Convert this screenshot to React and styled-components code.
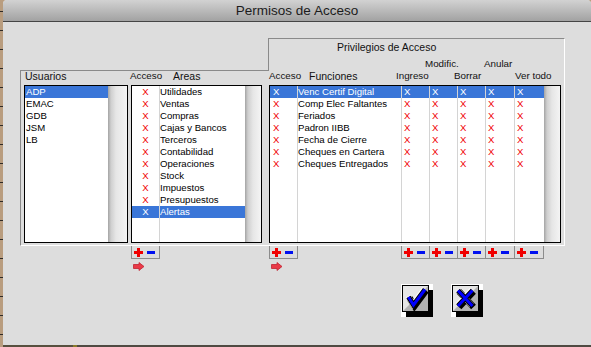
import React from "react";
import styled, { createGlobalStyle } from "styled-components";

const USERS = ["ADP", "EMAC", "GDB", "JSM", "LB"];
const AREAS = [
  "Utilidades",
  "Ventas",
  "Compras",
  "Cajas y Bancos",
  "Terceros",
  "Contabilidad",
  "Operaciones",
  "Stock",
  "Impuestos",
  "Presupuestos",
  "Alertas",
];
const FUNCS = [
  "Venc Certif Digital",
  "Comp Elec Faltantes",
  "Feriados",
  "Padron IIBB",
  "Fecha de Cierre",
  "Cheques en Cartera",
  "Cheques Entregados",
];
const PERM_COUNT = 5;
const FUNC_COLS = "28px 104px 28px 28px 28px 29px 29px";
const AREA_COLS = "28px 85px";

const GlobalStyle = createGlobalStyle`
  html, body { margin: 0; padding: 0; }
  body { font-family: "Liberation Sans", Arial, sans-serif; }
`;

const Screen = styled.div`
  display: flex;
  width: 591px;
  height: 347px;
  overflow: hidden;
  background: repeating-linear-gradient(
    to bottom,
    #b99d7f 0 11px,
    #2e2a26 11px 12px,
    #b99d7f 12px 19px
  );
`;

const Strip = styled.div`
  width: 3px;
  flex: none;
`;

const Window = styled.div`
  flex: 1;
  display: flex;
  flex-direction: column;
  background: #dddddd;
  border-radius: 4px 4px 0 0;
  overflow: hidden;
`;

const TitleBar = styled.div`
  height: 21px;
  flex: none;
  display: flex;
  align-items: center;
  justify-content: center;
  background: linear-gradient(#d2d2d2, #a2a2a2);
  border-bottom: 1px solid #454545;
  font-size: 13.5px;
  color: #1c1c1c;
`;

const Body = styled.div`
  flex: 1;
  padding: 16px 0 0 17px;
`;

const BottomEdge = styled.div`
  height: 2px;
  flex: none;
  background: linear-gradient(to right, #57503f 0 70px, #8a7a2a 70px 74px, #4f4a42 74px);
`;

const Group = styled.div`
  width: 545px;
  display: flex;
  flex-direction: column;
`;

const TabRow = styled.div`
  display: flex;
  justify-content: flex-end;
`;

const Tab = styled.div`
  width: 297px;
  height: 33px;
  box-sizing: border-box;
  border-top: 1px solid #8a8a8a;
  border-left: 1px solid #8a8a8a;
  border-right: 1px solid #ffffff;
  background: #dddddd;
  position: relative;
  z-index: 1;
  margin-bottom: -1px;
  padding: 2px 0 0 1px;
`;

const TabTitle = styled.div`
  font-size: 10.5px;
  line-height: 12px;
  padding-left: 67px;
  color: #111;
`;

const Box = styled.div`
  display: flex;
  border-top: 1px solid #8a8a8a;
  border-left: 1px solid #8a8a8a;
  border-right: 1px solid #ffffff;
  border-bottom: 1px solid #ffffff;
  padding: 0 3px 2px 3px;
`;

const Columns = styled.div`
  display: flex;
  padding-left: ${(p) => p.$pad || 0}px;
`;

const Section = styled.div`
  width: ${(p) => p.$w}px;
  margin-left: ${(p) => p.$ml || 0}px;
  flex: none;
  display: flex;
  flex-direction: column;
`;

const HeadGrid = styled.div`
  display: grid;
  grid-template-columns: ${(p) => p.$cols};
  align-items: start;
  height: ${(p) => p.$h || 14}px;
  padding-left: 1px;
  box-sizing: border-box;
  line-height: 10px;
  margin-top: ${(p) => p.$mt || 0}px;
`;

const Label = styled.span`
  grid-column: ${(p) => p.$col};
  justify-self: start;
  white-space: nowrap;
  margin-left: ${(p) => p.$shift || 0}px;
  font-size: ${(p) => (p.$big ? "10.5px" : "9.8px")};
  color: #111;
`;

const List = styled.div`
  height: 158px;
  box-sizing: border-box;
  border: 1px solid #000;
  background: #fff;
  display: flex;
`;

const ListGrid = styled.div`
  flex: 1;
  display: grid;
  grid-template-columns: ${(p) => p.$cols};
  grid-template-rows: repeat(${(p) => p.$rows}, 12px) 1fr;
`;

const Track = styled.div`
  width: ${(p) => p.$w}px;
  flex: none;
  background: linear-gradient(
    to right,
    #a4a4a4 0,
    #cfcfcf 3px,
    #e6e6e6 8px,
    #f4f4f4 100%
  );
`;

const Cell = styled.div`
  font-size: 9.6px;
  line-height: 12px;
  white-space: nowrap;
  overflow: hidden;
  box-sizing: border-box;
  padding-left: ${(p) => p.$pad || 0}px;
  text-align: ${(p) => (p.$center ? "center" : "left")};
  border-right: ${(p) => (p.$sep ? "1px solid #d4d4d4" : "none")};
  background: ${(p) => (p.$sel ? "#3a76d8" : "transparent")};
  color: ${(p) => (p.$sel ? "#fff" : p.$x ? "#f00000" : "#000")};
`;

const PmGrid = styled.div`
  display: grid;
  grid-template-columns: ${(p) => p.$cols};
`;

const PmBox = styled.div`
  grid-column: ${(p) => p.$col || "auto"};
  height: 13px;
  box-sizing: border-box;
  border-left: 1px solid #8c8c8c;
  border-bottom: 1px solid #8c8c8c;
  border-right: ${(p) => (p.$last ? "1px solid #8c8c8c" : "none")};
  display: flex;
  align-items: center;
  gap: 4px;
  padding-left: 2px;
`;

const ArrowRow = styled.div`
  margin-top: 3px;
  padding-left: 2px;
  height: 9px;
  display: flex;
`;

const ActionRow = styled.div`
  display: flex;
  gap: 17px;
  margin-top: 13px;
  padding-left: 381px;
`;

const ActionButton = styled.button`
  border: none;
  background: none;
  padding: 0;
  width: 33px;
  height: 34px;
  display: block;
  cursor: pointer;
`;

const Plus = () => (
  <svg width="9" height="9" viewBox="0 0 9 9">
    <rect x="0" y="3" width="9" height="3" fill="#f00000" />
    <rect x="3" y="0" width="3" height="9" fill="#f00000" />
  </svg>
);

const Minus = () => (
  <svg width="8" height="9" viewBox="0 0 8 9">
    <rect x="0" y="3" width="8" height="3" fill="#0010f0" />
  </svg>
);

const Arrow = () => (
  <svg width="12" height="9" viewBox="0 0 12 9">
    <path
      d="M0.5 2.5 H6 V0.5 L11 4.5 L6 8.5 V6.5 H0.5 Z"
      fill="#ea3a48"
      stroke="#c02432"
      strokeWidth="0.8"
    />
  </svg>
);

const PlusMinus = (props) => (
  <PmBox {...props}>
    <Plus />
    <Minus />
  </PmBox>
);

const IconFrame = ({ children }) => (
  <svg width="33" height="34" viewBox="0 0 33 34">
    <rect x="0" y="0" width="32" height="33" fill="#fff" />
    <rect x="5" y="6" width="27" height="27" fill="#000" />
    <rect x="2" y="2" width="25" height="25" fill="#b2b2b2" />
    <path d="M2 2 H27 L2 27 Z" fill="#e6e6e6" />
    <rect x="1.5" y="1.5" width="26" height="26" fill="none" stroke="#000" />
    {children}
  </svg>
);

const CheckIcon = () => {
  const d = "M7.5 13 L12.5 21 L24 5.5";
  return (
    <IconFrame>
      <path d={d} fill="none" stroke="#000" strokeWidth="6.5" transform="translate(1,1)" />
      <path d={d} fill="none" stroke="#fff" strokeWidth="5.5" transform="translate(-0.6,-0.6)" />
      <path d={d} fill="none" stroke="#000" strokeWidth="5" />
      <path d={d} fill="none" stroke="#0000ff" strokeWidth="3" />
    </IconFrame>
  );
};

const CrossIcon = () => {
  const d = "M7 6.5 L21.5 22 M21.5 6.5 L7 22";
  return (
    <IconFrame>
      <path d={d} fill="none" stroke="#000" strokeWidth="6.5" transform="translate(1,1)" />
      <path d={d} fill="none" stroke="#fff" strokeWidth="5.5" transform="translate(-0.6,-0.6)" />
      <path d={d} fill="none" stroke="#000" strokeWidth="5" />
      <path d={d} fill="none" stroke="#0000ff" strokeWidth="3" />
    </IconFrame>
  );
};

const UsersList = () => (
  <List>
    <ListGrid $cols="1fr" $rows={USERS.length}>
      {USERS.map((u, i) => (
        <Cell key={u} $pad={1} $sel={i === 0}>
          {u}
        </Cell>
      ))}
      <Cell />
    </ListGrid>
    <Track $w={19} />
  </List>
);

const AreasList = () => (
  <List>
    <ListGrid $cols={AREA_COLS} $rows={AREAS.length}>
      {AREAS.map((a, i) => (
        <React.Fragment key={a}>
          <Cell $x $center $sep $sel={i === AREAS.length - 1}>
            X
          </Cell>
          <Cell $sel={i === AREAS.length - 1}>{a}</Cell>
        </React.Fragment>
      ))}
      <Cell $sep />
      <Cell />
    </ListGrid>
    <Track $w={16} />
  </List>
);

const FuncsList = () => (
  <List>
    <ListGrid $cols={FUNC_COLS} $rows={FUNCS.length}>
      {FUNCS.map((f, i) => (
        <React.Fragment key={f}>
          <Cell $x $pad={3} $sep $sel={i === 0}>
            X
          </Cell>
          <Cell $sep $sel={i === 0}>
            {f}
          </Cell>
          {Array.from({ length: PERM_COUNT }).map((_, k) => (
            <Cell key={k} $x $pad={2} $sep={k < PERM_COUNT - 1} $sel={i === 0}>
              X
            </Cell>
          ))}
        </React.Fragment>
      ))}
      {Array.from({ length: 7 }).map((_, k) => (
        <Cell key={k} $sep={k < 6} />
      ))}
    </ListGrid>
    <Track $w={16} />
  </List>
);

const App = () => {
  return (
    <Screen>
      <GlobalStyle />
      <Strip />
      <Window>
        <TitleBar>Permisos de Acceso</TitleBar>
        <Body>
          <Group>
            <TabRow>
              <Tab>
                <TabTitle>Privilegios de Acceso</TabTitle>
                <HeadGrid $cols={FUNC_COLS} $h={12} $mt={6}>
                  <Label $col={4} $shift={-6}>
                    Modific.
                  </Label>
                  <Label $col={6} $shift={-3}>
                    Anular
                  </Label>
                </HeadGrid>
              </Tab>
            </TabRow>
            <Box>
              <Section $w={104}>
                <HeadGrid $cols="1fr">
                  <Label $col={1} $big>
                    Usuarios
                  </Label>
                </HeadGrid>
                <UsersList />
              </Section>
              <Section $w={131} $ml={3}>
                <HeadGrid $cols={AREA_COLS}>
                  <Label $col={1} $shift={-2}>
                    Acceso
                  </Label>
                  <Label $col={2} $shift={13} $big>
                    Areas
                  </Label>
                </HeadGrid>
                <AreasList />
              </Section>
              <Section $w={292} $ml={7}>
                <HeadGrid $cols={FUNC_COLS}>
                  <Label $col={1} $shift={-1}>
                    Acceso
                  </Label>
                  <Label $col={2} $shift={11} $big>
                    Funciones
                  </Label>
                  <Label $col={3} $shift={-6}>
                    Ingreso
                  </Label>
                  <Label $col={5} $shift={-4}>
                    Borrar
                  </Label>
                  <Label $col={7}>Ver todo</Label>
                </HeadGrid>
                <FuncsList />
              </Section>
            </Box>
          </Group>

          <Columns $pad={4}>
            <Section $w={104} />
            <Section $w={131} $ml={3}>
              <PmGrid $cols="29px">
                <PlusMinus $last />
              </PmGrid>
              <ArrowRow>
                <Arrow />
              </ArrowRow>
            </Section>
            <Section $w={292} $ml={7}>
              <PmGrid $cols="29px 103px 28px 28px 28px 29px 30px">
                <PlusMinus $col={1} $last />
                <PlusMinus $col={3} />
                <PlusMinus $col={4} />
                <PlusMinus $col={5} />
                <PlusMinus $col={6} />
                <PlusMinus $col={7} $last />
              </PmGrid>
              <ArrowRow>
                <Arrow />
              </ArrowRow>
            </Section>
          </Columns>

          <ActionRow>
            <ActionButton aria-label="Aceptar">
              <CheckIcon />
            </ActionButton>
            <ActionButton aria-label="Cancelar">
              <CrossIcon />
            </ActionButton>
          </ActionRow>
        </Body>
        <BottomEdge />
      </Window>
    </Screen>
  );
};

export default App;
